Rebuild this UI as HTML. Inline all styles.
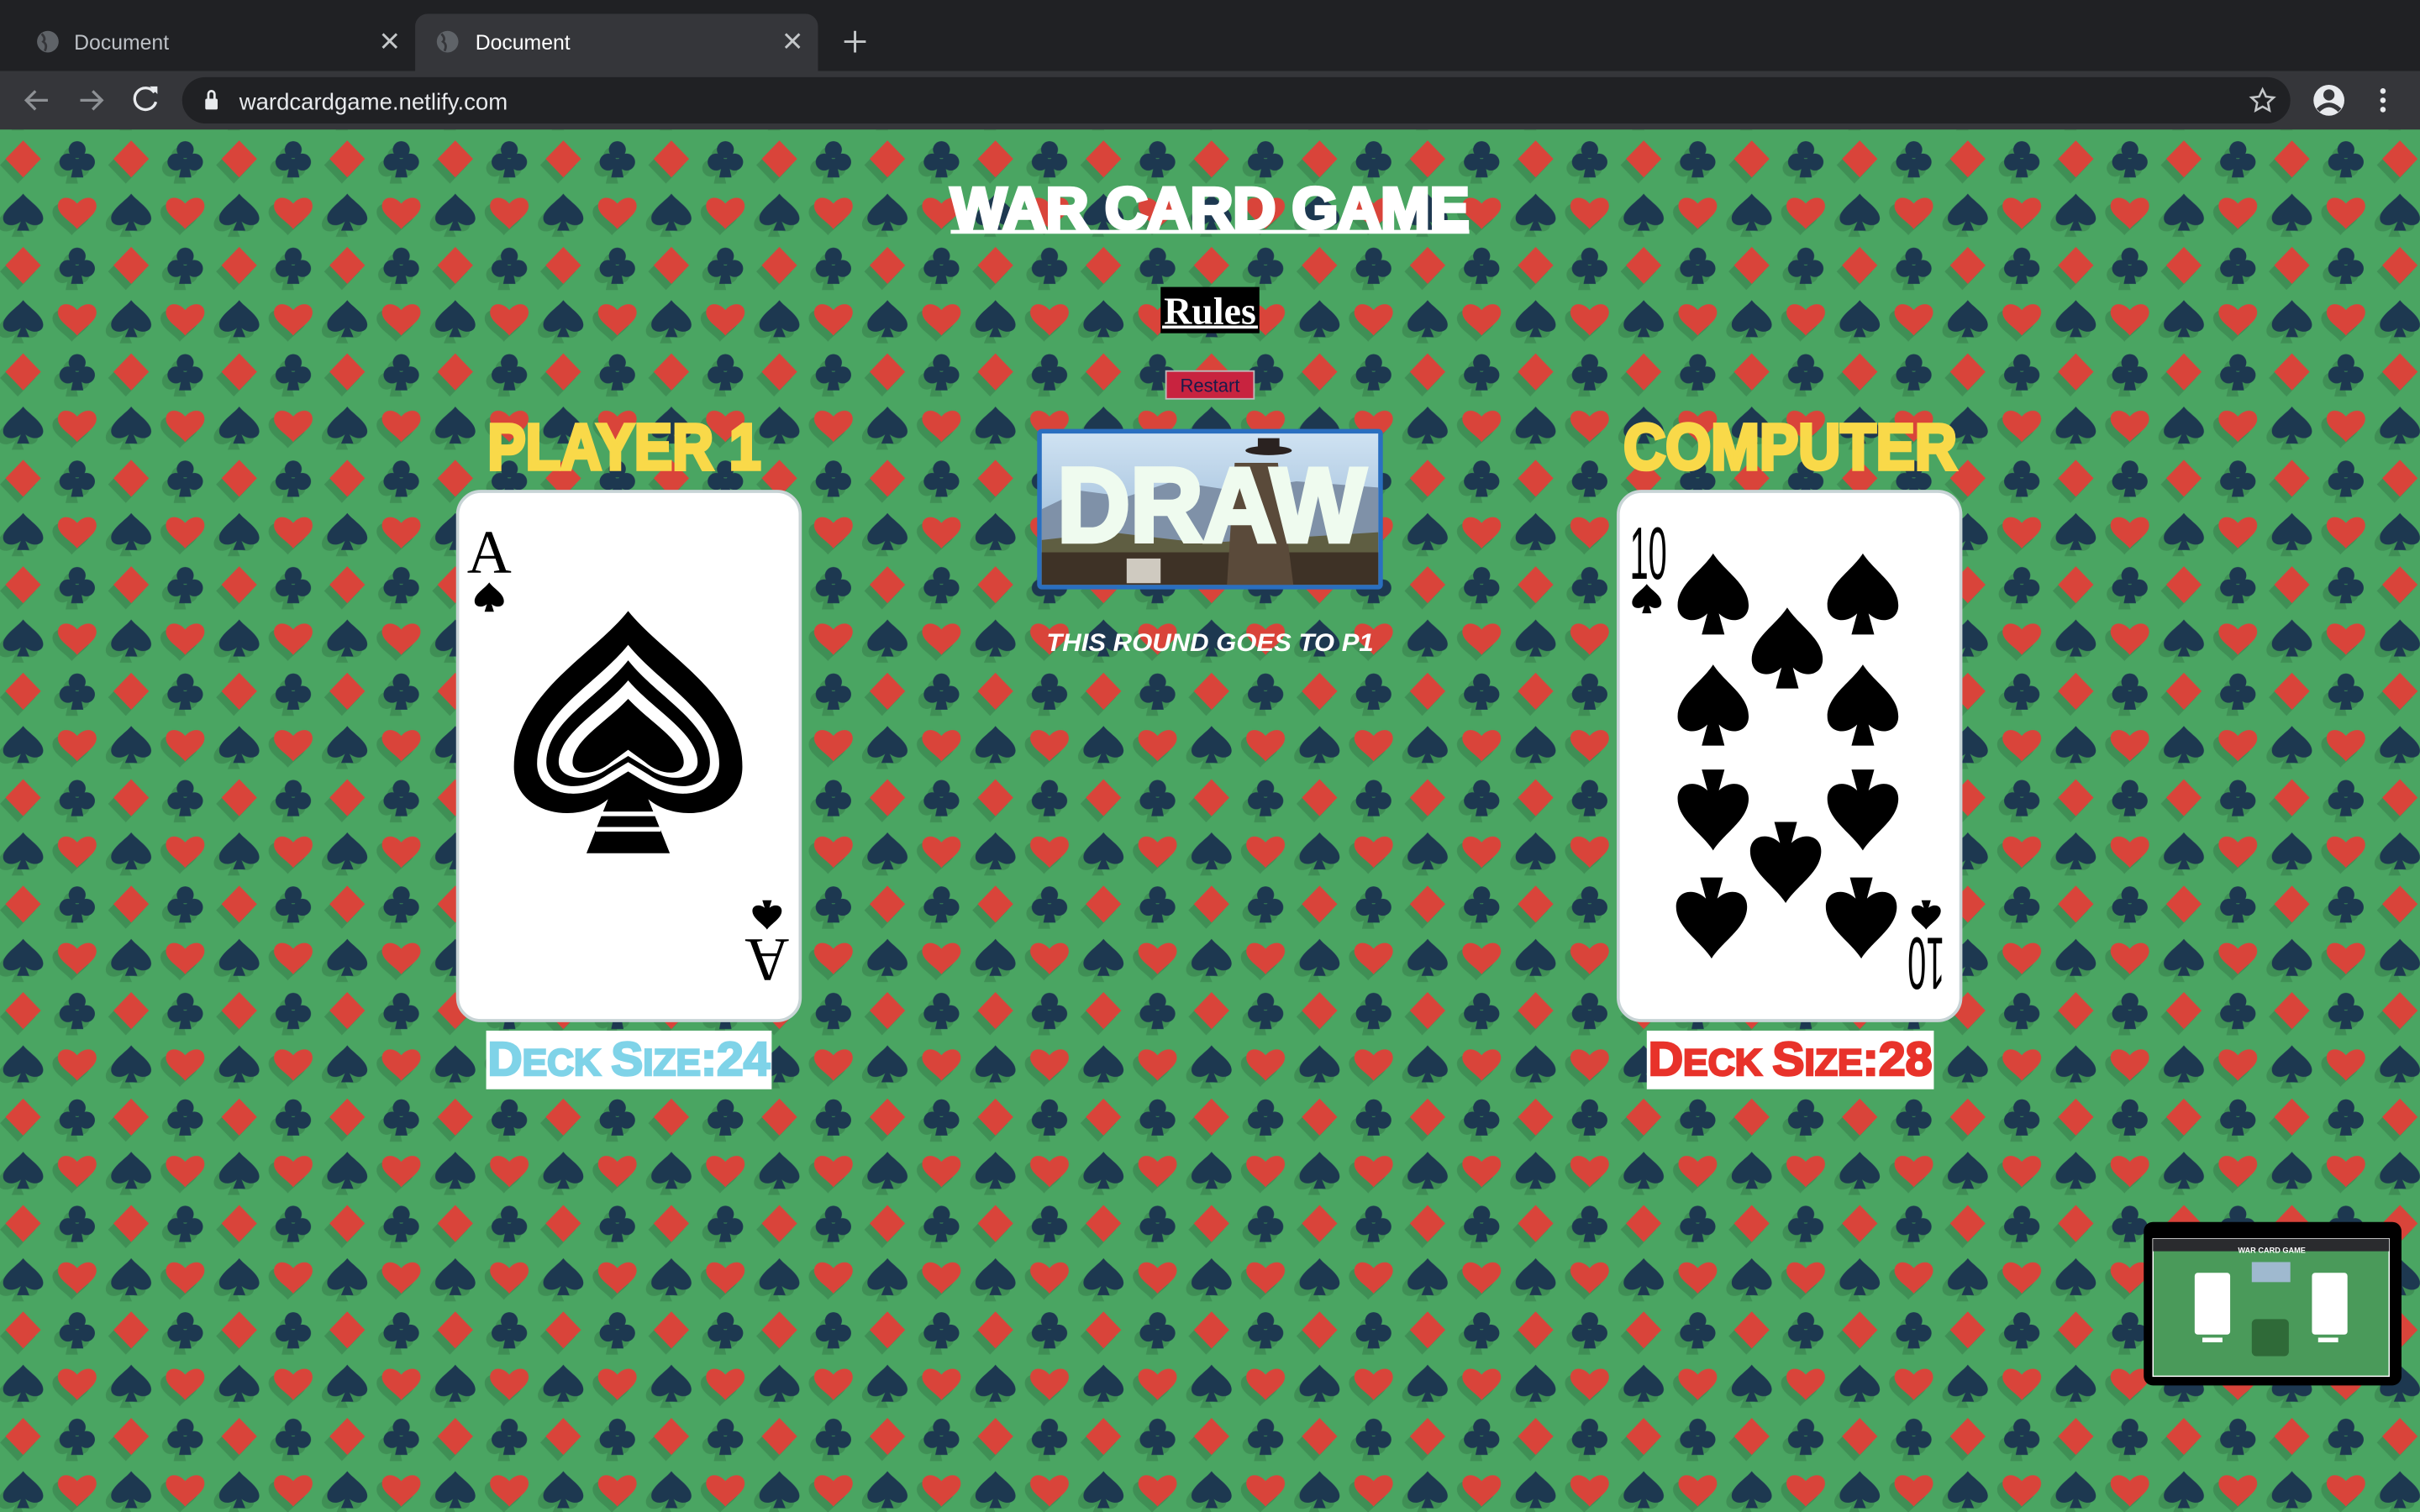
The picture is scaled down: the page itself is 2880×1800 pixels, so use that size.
<!DOCTYPE html>
<html><head><meta charset="utf-8">
<style>
html,body{margin:0;padding:0;width:2880px;height:1800px;overflow:hidden;background:#4aa562}
#w{position:absolute;left:0;top:0;width:1568px;height:980px;transform:scale(1.8367347);transform-origin:0 0;font-family:"Liberation Sans",sans-serif;overflow:hidden}
.abs{position:absolute}
</style></head><body><div id="w">
<div class="abs" style="left:0;top:0;width:1568px;height:46px;background:#202124"></div>
<div class="abs" style="left:269px;top:9px;width:261px;height:37px;background:#35363a;border-radius:8px 8px 0 0"></div>
<div class="abs" style="left:0;top:46px;width:1568px;height:38px;background:#35363a"></div>
<div class="abs" style="left:118px;top:50px;width:1366px;height:30px;background:#202124;border-radius:15px"></div>
<svg class="abs" style="left:0;top:0" width="1568" height="84">
 <g fill="#5f6368"><circle cx="31" cy="27" r="7"/><circle cx="290" cy="27" r="7"/></g>
 <g stroke="#35363a" stroke-width="1.5" fill="none"><path d="M27 22 q3 3 1 5 q3 2 1 6"/><path d="M286 22 q3 3 1 5 q3 2 1 6"/></g>
 <text x="48" y="32" font-size="13.5" fill="#bdc1c6" font-family="Liberation Sans">Document</text>
 <text x="308" y="32" font-size="13.5" fill="#fff" font-family="Liberation Sans">Document</text>
 <g stroke="#c4c7c9" stroke-width="1.6"><path d="M248 22l9 9M257 22l-9 9"/><path d="M509 22l9 9M518 22l-9 9"/><path d="M554 20v14M547 27h14"/></g>
 <g stroke="#8e9195" stroke-width="1.8" fill="none"><path d="M31 65H17M23 59l-6 6 6 6"/><path d="M52 65h14M60 59l6 6-6 6"/></g>
 <path d="M100 60a7 7 0 1 0 1 6" stroke="#e8eaed" stroke-width="1.8" fill="none"/><path d="M97 56h5v5z" fill="#e8eaed"/>
 <rect x="133" y="64" width="8" height="7" rx="1" fill="#e8eaed"/><path d="M135 64v-3a2 2 0 0 1 4 0v3" stroke="#e8eaed" stroke-width="1.5" fill="none"/>
 <text x="155" y="71" font-size="15" fill="#e8eaed" font-family="Liberation Sans">wardcardgame.netlify.com</text>
 <path d="M1466 58l2.2 4.6 5 .6-3.7 3.4 1 5-4.5-2.5-4.5 2.5 1-5-3.7-3.4 5-.6z" stroke="#c4c7c9" stroke-width="1.4" fill="none"/>
 <circle cx="1509" cy="65" r="10" fill="#e8eaed"/><circle cx="1509" cy="61.5" r="3.6" fill="#35363a"/><path d="M1502 71.5q7-7 14 0" stroke="#35363a" stroke-width="3" fill="none"/>
 <g fill="#e8eaed"><circle cx="1544" cy="59" r="1.8"/><circle cx="1544" cy="65" r="1.8"/><circle cx="1544" cy="71" r="1.8"/></g>
</svg>
<svg class="abs" style="left:0;top:84px" width="1568" height="896">
 <defs>
  <path id="dia" d="M0,-12 L11.5,0 L0,12 L-11.5,0Z"/>
  <path id="hea" d="M0,11 C-4,6 -12.5,2 -12.5,-4 C-12.5,-10 -5,-11.5 0,-5.5 C5,-11.5 12.5,-10 12.5,-4 C12.5,2 4,6 0,11Z"/>
  <path id="spa" d="M0,-12 C4,-7 13,-2 13,4 C13,9 6,10 1.5,6 L4,12 L-4,12 L-1.5,6 C-6,10 -13,9 -13,4 C-13,-2 -4,-7 0,-12Z"/>
  <g id="clu"><circle cx="0" cy="-6" r="5.5"/><circle cx="-6" cy="2" r="5.5"/><circle cx="6" cy="2" r="5.5"/><path d="M-1.5,0 L1.5,0 L4,12 L-4,12Z"/></g>
  <pattern id="p" patternUnits="userSpaceOnUse" x="-2.5" y="2" width="70" height="69">
   <rect width="70" height="69" fill="#4aa562"/>
   <g fill="#2f6e40" opacity=".4">
    <use href="#dia" x="14" y="21"/><use href="#clu" x="49" y="21"/>
    <use href="#spa" x="14" y="55.5"/><use href="#hea" x="49" y="55.5"/>
   </g>
   <use href="#dia" x="17.5" y="17" fill="#d9443a"/><use href="#clu" x="52.5" y="17" fill="#1d3850"/>
   <use href="#spa" x="17.5" y="51.5" fill="#1d3850"/><use href="#hea" x="52.5" y="51.5" fill="#d9443a"/>
  </pattern>
 </defs>
 <rect width="1568" height="896" fill="url(#p)"/>
</svg>
<svg class="abs" style="left:0;top:0" width="1568" height="980">
 <text x="616" y="148" font-size="38" font-weight="bold" fill="#fff" stroke="#fff" stroke-width="2.5" textLength="336" lengthAdjust="spacingAndGlyphs" font-family="Liberation Sans">WAR CARD GAME</text>
 <rect x="616" y="149" width="336" height="2.5" fill="#fff"/>
 <text x="316" y="304" font-size="42" font-weight="bold" fill="#f9d949" stroke="#f9d949" stroke-width="2.5" textLength="177" lengthAdjust="spacingAndGlyphs" font-family="Liberation Sans">PLAYER 1</text>
 <text x="1052" y="304" font-size="42" font-weight="bold" fill="#f9d949" stroke="#f9d949" stroke-width="2.5" textLength="216" lengthAdjust="spacingAndGlyphs" font-family="Liberation Sans">COMPUTER</text>
 <rect x="315" y="668" width="185" height="38" fill="#fff"/>
 <text x="316" y="697" font-weight="bold" fill="#7fd3e8" stroke="#7fd3e8" stroke-width="1.4" textLength="183" lengthAdjust="spacingAndGlyphs" font-family="Liberation Sans"><tspan font-size="31">D</tspan><tspan font-size="24">ECK </tspan><tspan font-size="31">S</tspan><tspan font-size="24">IZE</tspan><tspan font-size="31">:24</tspan></text>
 <rect x="1067" y="668" width="186" height="38" fill="#fff"/>
 <text x="1068" y="697" font-weight="bold" fill="#e8322a" stroke="#e8322a" stroke-width="1.4" textLength="184" lengthAdjust="spacingAndGlyphs" font-family="Liberation Sans"><tspan font-size="31">D</tspan><tspan font-size="24">ECK </tspan><tspan font-size="31">S</tspan><tspan font-size="24">IZE</tspan><tspan font-size="31">:28</tspan></text>
 <rect x="752" y="186" width="64" height="30" fill="#000"/>
 <text x="784" y="210" font-size="25" font-weight="bold" fill="#fff" text-anchor="middle" font-family="Liberation Serif">Rules</text>
 <rect x="753" y="211" width="62" height="2" fill="#fff"/>
 <rect x="755.5" y="240.5" width="57" height="18" fill="#c8233f" stroke="#bbb" stroke-width="1"/>
 <text x="784" y="254" font-size="12" fill="#1a1a4a" text-anchor="middle" font-family="Liberation Sans">Restart</text>
 <rect x="672" y="278" width="224" height="104" rx="3" fill="#2a6fc0"/>
 <defs><linearGradient id="sky" x1="0" y1="0" x2="0" y2="1"><stop offset="0" stop-color="#cfe2f2"/><stop offset=".55" stop-color="#a9c5df"/><stop offset="1" stop-color="#8ea6b8"/></linearGradient></defs>
 <rect x="675" y="281" width="218" height="98" fill="url(#sky)"/>
 <path d="M675 330 L700 318 L730 322 L760 312 L800 318 L840 312 L893 316 V379 H675Z" fill="#7f91a8"/>
 <path d="M675 350 L720 345 L780 352 L893 345 V379 H675Z" fill="#5f5e42"/>
 <rect x="675" y="358" width="218" height="21" fill="#3e3226"/>
 <rect x="730" y="362" width="22" height="16" fill="#cfcac0"/>
 <path d="M800 300 L828 300 L838 379 L795 379Z" fill="#5a4a3a"/>
 <ellipse cx="822" cy="292" rx="15" ry="3" fill="#2a2220"/><rect x="815" y="284" width="14" height="8" fill="#2a2220"/>
 <text x="785" y="351" font-size="68" font-weight="bold" fill="#effbef" stroke="#effbef" stroke-width="3" text-anchor="middle" textLength="200" lengthAdjust="spacingAndGlyphs" font-family="Liberation Sans">DRAW</text>
 <text x="784" y="422" font-size="16" font-weight="bold" font-style="italic" fill="#fff" text-anchor="middle" textLength="212" lengthAdjust="spacingAndGlyphs" font-family="Liberation Sans">THIS ROUND GOES TO P1</text>
 <defs>
  <path id="sp" d="M0,-25 C8,-14 25,-6 25,7 C25,17 12,19 4,12 L8,25 L-8,25 L-4,12 C-12,19 -25,17 -25,7 C-25,-6 -8,-14 0,-25Z"/>
 </defs>
 <rect x="296.5" y="318.5" width="222" height="343" rx="15" fill="#fff" stroke="#c8d4d6" stroke-width="2"/>
 <rect x="1048.5" y="318.5" width="222" height="343" rx="15" fill="#fff" stroke="#c8d4d6" stroke-width="2"/>
 <text x="317" y="371" font-size="40" fill="#000" text-anchor="middle" font-family="Liberation Serif">A</text>
 <use href="#sp" transform="translate(317,387) scale(.38)"/>
 <g transform="translate(497,626) rotate(180)"><text x="0" y="17" font-size="40" fill="#000" text-anchor="middle" font-family="Liberation Serif">A</text><use href="#sp" transform="translate(0,33) scale(.38)"/></g>
 <path d="M407,396 C430,425 481,450 481,497 C481,528 440,535 420,518 L434,553 L380,553 L394,518 C374,535 333,528 333,497 C333,450 384,425 407,396Z" fill="#000"/>
 <path d="M407,418 C428,444 466,462 466,495 C466,515 440,520 420,508 L407,500 L394,508 C374,520 348,515 348,495 C348,462 386,444 407,418Z" fill="#fff"/>
 <path d="M407,428 C426,452 460,468 460,494 C460,512 437,514 420,502 L407,494 L394,502 C377,514 354,512 354,494 C354,468 388,452 407,428Z" fill="#000"/>
 <path d="M407,441 C423,460 452,475 452,494 C452,505 433,508 420,498 L407,490 L394,498 C381,508 362,505 362,494 C362,475 391,460 407,441Z" fill="#fff"/>
 <path d="M407,453 C421,468 443,480 443,494 C443,503 428,503 418,494 L407,486 L396,494 C386,503 371,503 371,494 C371,480 393,468 407,453Z" fill="#000"/>
 <rect x="388" y="526" width="38" height="3" fill="#fff"/><rect x="386" y="536" width="42" height="3" fill="#fff"/>
 <text x="1068" y="375" font-size="48" fill="#000" text-anchor="middle" font-family="Liberation Sans" textLength="24" lengthAdjust="spacingAndGlyphs">10</text>
 <use href="#sp" transform="translate(1067,388) scale(.38)"/>
 <g transform="translate(1248,626) rotate(180)"><text x="0" y="18" font-size="48" fill="#000" text-anchor="middle" font-family="Liberation Sans" textLength="24" lengthAdjust="spacingAndGlyphs">10</text><use href="#sp" transform="translate(0,33) scale(.38)"/></g>
 <use href="#sp" transform="translate(1110,385) scale(.92,1.05)"/>
 <use href="#sp" transform="translate(1207,385) scale(.92,1.05)"/>
 <use href="#sp" transform="translate(1158,420) scale(.92,1.05)"/>
 <use href="#sp" transform="translate(1110,457) scale(.92,1.05)"/>
 <use href="#sp" transform="translate(1207,457) scale(.92,1.05)"/>
 <use href="#sp" transform="translate(1110,525) rotate(180) scale(.92,1.05)"/>
 <use href="#sp" transform="translate(1207,525) rotate(180) scale(.92,1.05)"/>
 <use href="#sp" transform="translate(1157,559) rotate(180) scale(.92,1.05)"/>
 <use href="#sp" transform="translate(1109,595) rotate(180) scale(.92,1.05)"/>
 <use href="#sp" transform="translate(1206,595) rotate(180) scale(.92,1.05)"/>
 <rect x="1389" y="792" width="167" height="106" rx="6" fill="#000"/>
 <rect x="1395" y="803" width="153" height="89" fill="#4a9a5a" stroke="#fff" stroke-width=".8"/>
 <rect x="1395" y="803" width="153" height="8" fill="#2a2b2e"/>
 <rect x="1422" y="825" width="23" height="40" rx="2" fill="#fff"/>
 <rect x="1498" y="825" width="23" height="40" rx="2" fill="#fff"/>
 <rect x="1459" y="818" width="25" height="13" fill="#9fb9cf"/>
 <text x="1472" y="812" font-size="5" font-weight="bold" fill="#fff" text-anchor="middle" font-family="Liberation Sans">WAR CARD GAME</text>
 <rect x="1459" y="855" width="24" height="24" rx="3" fill="#2f6a38"/>
 <rect x="1427" y="867" width="13" height="3" fill="#fff"/><rect x="1502" y="867" width="13" height="3" fill="#fff"/>
</svg>
</div></body></html>
